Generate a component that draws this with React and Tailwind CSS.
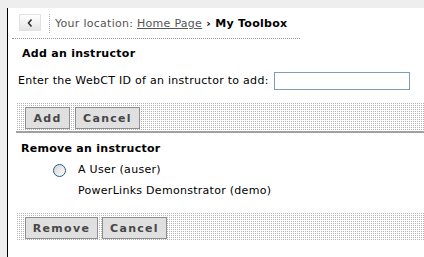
import React from "react";

function Btn({ children, w }) {
  return (
    <div
      className={`${w} h-[22px] flex items-center justify-center bg-[#e0e0e0] border border-[#8e8e8e] text-[#474747] font-bold tracking-[1.3px] text-[11px] leading-none`}
    >
      {children}
    </div>
  );
}

export default function App() {
  return (
    <div className="w-[424px] h-[257px] bg-[#eeeeee] flex flex-col font-['DejaVu_Sans',_'Verdana',_sans-serif] text-[11px] tracking-[0.28px] text-black overflow-hidden">
      <div className="h-[8px] shrink-0" />
      <div className="flex flex-1 min-h-0">
        <div className="w-[7px] shrink-0" />
        <div className="flex-1 bg-white border-l border-black flex flex-col">
          {/* breadcrumb */}
          <div className="flex items-start pt-[6px] h-[30px]">
            <div className="ml-[11px] w-[22px] h-[17px] bg-linear-to-b from-white to-[#e4e4e4] border border-[#e2e2e2] flex items-center justify-center">
              <svg width="6" height="8" viewBox="0 0 6 8">
                <polyline points="4.5,0.5 1.5,4 4.5,7.5" fill="none" stroke="#333" strokeWidth="1.6" />
              </svg>
            </div>
            <div className="ml-[8px] h-[19px] border-l border-dotted border-[#aaaaaa]" />
            <div className="ml-[5px] mt-[2px] h-[17px] flex items-center text-[#555555] whitespace-nowrap">
              <span>Your location:&nbsp;</span>
              <span className="underline">Home Page</span>
              <span className="text-black font-bold">&nbsp;›&nbsp;My Toolbox</span>
            </div>
          </div>
          <div className="ml-[4px] w-[288px] border-t border-dotted border-[#9a9a9a]" />

          <div className="mt-[8px] pl-[14px] leading-[13px] font-bold">Add an instructor</div>

          <div className="mt-[12px] pl-[10px] flex items-center h-[18px]">
            <span className="whitespace-nowrap">Enter the WebCT ID of an instructor to add:</span>
            <div className="ml-[5px] w-[136px] h-[18px] border border-[#7f9db9] bg-white" />
          </div>

          <div className="mt-[13px] ml-[8px] h-[30px] pt-[4px] pl-[9px] flex gap-[5px] border-b-2 border-[#a0a0a0] [background-image:conic-gradient(#b4b4b4_25%,transparent_0)] [background-size:2px_2px]">
            <Btn w="w-[45px]">Add</Btn>
            <Btn w="w-[65px]">Cancel</Btn>
          </div>

          <div className="mt-[9px] pl-[13px] leading-[13px] font-bold">Remove an instructor</div>

          <div className="mt-[8px] h-[15px] flex items-center">
            <div className="ml-[45px] w-[13px] h-[13px] rounded-full border border-[#2a5a8c] bg-linear-to-br from-[#d4d4d4] to-white" />
            <span className="ml-[12px]">A User (auser)</span>
          </div>

          <div className="mt-[6px] pl-[70px] leading-[13px]">PowerLinks Demonstrator (demo)</div>

          <div className="mt-[16px] ml-[8px] h-[28px] pt-[4px] pl-[9px] flex gap-[4px] [background-image:conic-gradient(#b4b4b4_25%,transparent_0)] [background-size:2px_2px]">
            <Btn w="w-[73px]">Remove</Btn>
            <Btn w="w-[65px]">Cancel</Btn>
          </div>
        </div>
      </div>
    </div>
  );
}
